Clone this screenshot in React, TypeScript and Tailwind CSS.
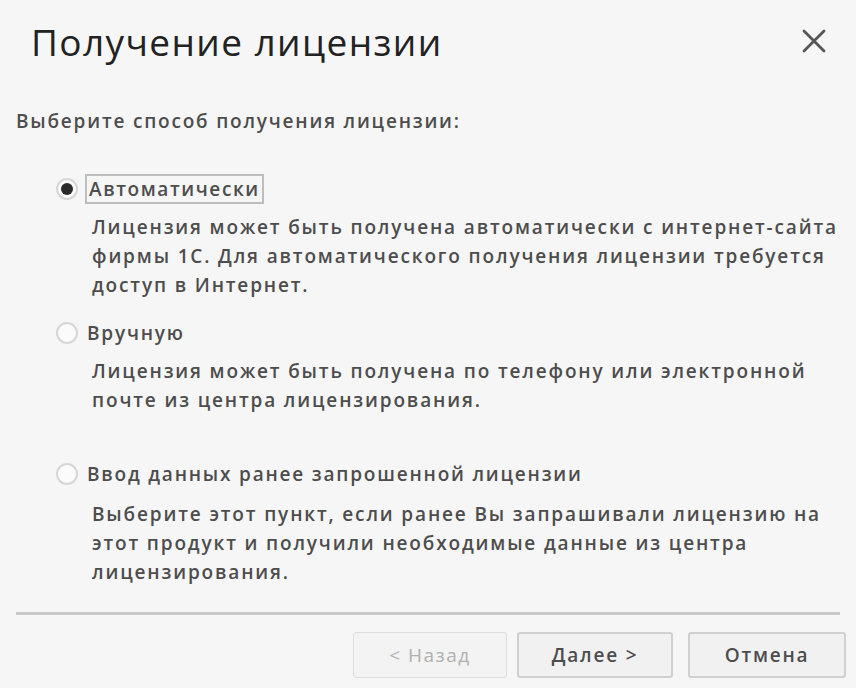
import React from "react";

function Radio({ checked }: { checked?: boolean }) {
  return (
    <div className="w-[22px] h-[22px] rounded-full border-2 border-[#d6d6d6] bg-[#fbfbfb] flex items-center justify-center shrink-0">
      {checked && <div className="w-[12px] h-[12px] rounded-full bg-[#2a2a2a]" />}
    </div>
  );
}

export default function App() {
  return (
    <div
      className="w-[856px] h-[688px] bg-[#f6f6f6] text-[#4d4d4d] overflow-hidden flex flex-col"
      style={{ fontFamily: '"Open Sans", "Liberation Sans", sans-serif' }}
    >
      <div className="flex items-start justify-between pl-[31px] pr-[30px] pt-[16px]">
        <div className="text-[37px] leading-[52px] tracking-[1.4px] text-[#222]">Получение лицензии</div>
        <svg width="24" height="24" viewBox="0 0 24 24" className="mt-[13px]">
          <path d="M2 2 L22 22 M22 2 L2 22" stroke="#555" strokeWidth="2.8" strokeLinecap="round" />
        </svg>
      </div>

      <div className="pl-[16px] mt-[40px] text-[19px] leading-[26px] tracking-[1.8px] font-semibold">
        Выберите способ получения лицензии:
      </div>

      <div className="pl-[56px] mt-[40px] flex items-center gap-[7px]">
        <Radio checked />
        <div className="border-2 border-[#bdbdbd] px-[2px] h-[30px] flex items-center text-[19px] tracking-[1.6px] font-semibold">
          Автоматически
        </div>
      </div>
      <div className="pl-[92px] pr-[10px] mt-[9px] text-[19px] leading-[29px] tracking-[1.85px] font-semibold whitespace-nowrap">
        Лицензия может быть получена автоматически с интернет-сайта
        <br />
        фирмы 1С. Для автоматического получения лицензии требуется
        <br />
        доступ в Интернет.
      </div>

      <div className="pl-[56px] mt-[18px] flex items-center gap-[9px]">
        <Radio />
        <div className="h-[30px] flex items-center text-[19px] tracking-[1.8px] font-semibold">Вручную</div>
      </div>
      <div className="pl-[92px] pr-[10px] mt-[9px] text-[19px] leading-[29px] tracking-[1.85px] font-semibold whitespace-nowrap">
        Лицензия может быть получена по телефону или электронной
        <br />
        почте из центра лицензирования.
      </div>

      <div className="pl-[56px] mt-[44px] flex items-center gap-[9px]">
        <Radio />
        <div className="h-[30px] flex items-center text-[19px] tracking-[1.8px] font-semibold">
          Ввод данных ранее запрошенной лицензии
        </div>
      </div>
      <div className="pl-[92px] pr-[10px] mt-[11px] text-[19px] leading-[29px] tracking-[1.85px] font-semibold whitespace-nowrap">
        Выберите этот пункт, если ранее Вы запрашивали лицензию на
        <br />
        этот продукт и получили необходимые данные из центра
        <br />
        лицензирования.
      </div>

      <div className="mx-[16px] mt-[25px] h-[3px] bg-[#c9c9c9]" />

      <div className="flex justify-end pr-[10px] mt-[17px]">
        <button className="w-[154px] h-[46px] rounded-[3px] border border-[#dddddd] bg-[#f3f3f3] text-[19px] tracking-[1.5px] text-[#b0b0b0]">
          &lt; Назад
        </button>
        <button className="ml-[10px] w-[156px] h-[46px] rounded-[3px] border-2 border-[#d0d0d0] bg-[#f1f1f1] text-[19px] tracking-[1.8px] font-semibold">
          Далее &gt;
        </button>
        <button className="ml-[15px] w-[158px] h-[46px] rounded-[3px] border-2 border-[#d0d0d0] bg-[#f1f1f1] text-[19px] tracking-[1.8px] font-semibold">
          Отмена
        </button>
      </div>
    </div>
  );
}
